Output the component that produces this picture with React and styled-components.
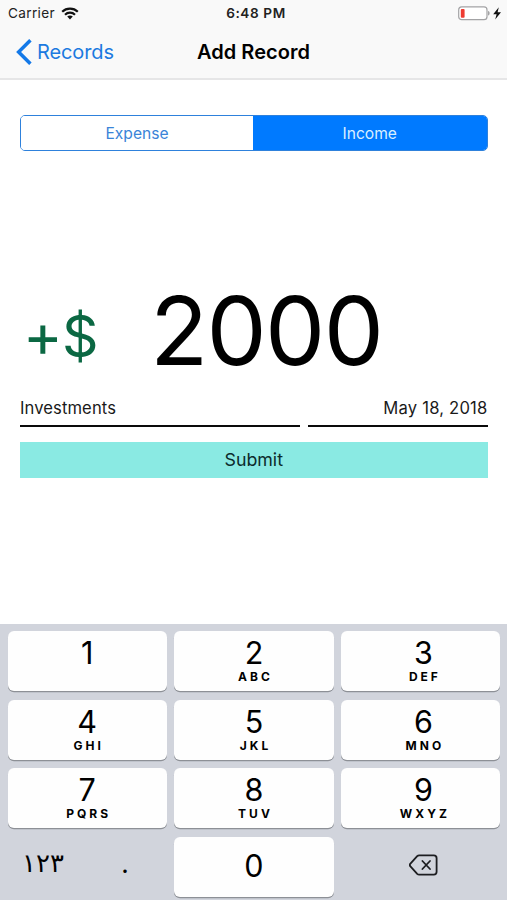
import React, {useState} from 'react'
import styled, {createGlobalStyle} from "styled-components"

const GlobalStyle = createGlobalStyle`
  * {
    box-sizing: border-box;
  }

  body {
    margin: 0;
    background: #fff;
    font-family: Inter, "Liberation Sans", sans-serif;
    color: #000;
  }

  button {
    font-family: inherit;
    color: inherit;
    border: none;
    padding: 0;
    background: none;
  }
`

const Screen = styled.div`
  display: flex;
  flex-direction: column;
  width: 507px;
  height: 900px;
  overflow: hidden;
  background: #fff;
`

const Header = styled.header`
  height: 80px;
  background: #f9f9f9;
  border-bottom: 2px solid #e6e6e7;
`

const StatusBar = styled.div`
  display: grid;
  grid-template-columns: 1fr auto 1fr;
  align-items: center;
  height: 27px;
  padding: 0 5px 0 8px;
  font-size: 13.6px;
  line-height: 27px;
  color: #222;
`

const Carrier = styled.div`
  display: flex;
  align-items: center;
  gap: 6px;
  letter-spacing: 0.35px;
`

const Time = styled.div`
  padding-left: 2px;
  font-weight: 600;
  font-size: 13.6px;
  letter-spacing: 0.6px;
`

const Battery = styled.div`
  display: flex;
  justify-content: flex-end;
`

const NavBar = styled.nav`
  display: grid;
  grid-template-columns: 1fr auto 1fr;
  align-items: center;
  height: 50px;
  padding: 0 16px;
`

const BackBtn = styled.button`
  display: flex;
  align-items: center;
  gap: 5px;
  font-size: 20px;
  letter-spacing: -0.1px;
  color: #1c7ae0;
`

const Title = styled.h1`
  margin: 0;
  font-size: 20px;
  font-weight: 600;
  letter-spacing: 0.05px;
`

const Form = styled.main`
  display: flex;
  flex-direction: column;
  height: 544px;
  padding: 35px 19.5px 0 20px;
`

const Tabs = styled.div`
  display: grid;
  grid-template-columns: 232px 1fr;
  height: 36px;
  border: 1.5px solid #2e81dc;
  border-radius: 5px;
  overflow: hidden;
`

const TabBtn = styled.button`
  font-size: 15.6px;
  color: ${props => props.$active ? '#d9efff' : '#3a84d8'};
  background: ${props => props.$active ? '#007aff' : '#fff'};
`

const Amount = styled.div`
  display: flex;
  height: 116px;
  margin-top: 121px;
  line-height: 116px;
`

const Sign = styled.span`
  width: 130px;
  padding: 5px 0 0 3px;
  font-size: 57px;
  font-feature-settings: "calt" 0;
  color: #0b6843;
`

const Operator = styled.span`
  font-size: 60px;
  letter-spacing: -0.8px;
`

const Value = styled.span`
  font-size: 95.5px;
  letter-spacing: -1.7px;
`

const Fields = styled.div`
  display: grid;
  grid-template-columns: 280px 1fr;
  gap: 8px;
  margin-top: 5px;
`

const Field = styled.div`
  height: 34px;
  border-bottom: 2.5px solid #0a0a0a;
  font-size: 16.6px;
  letter-spacing: ${props => props.$right ? '0.2px' : '0.1px'};
  line-height: 31px;
  text-align: ${props => props.$right ? 'right' : 'left'};
  color: #1a1a1a;
`

const SubmitBtn = styled.button`
  flex: none;
  height: 36px;
  margin-top: 15px;
  padding-bottom: 1px;
  background: #8aeae3;
  font-size: 17.8px;
  color: #0c2b2c;
`

const Keyboard = styled.div`
  flex: 1;
  display: grid;
  grid-template-columns: repeat(3, minmax(0, 1fr));
  grid-auto-rows: 60px;
  gap: 8.6px 7.2px;
  padding: 7px 7px 0 8px;
  background: #d1d4dc;

  > :nth-child(3n) {
    padding-left: 6px;
  }
  > :nth-child(3n + 1) {
    padding-right: 1px;
  }
`

const Key = styled.button`
  display: flex;
  flex-direction: column;
  align-items: center;
  justify-content: ${props => props.$center ? 'center' : 'flex-start'};
  padding-top: ${props => props.$center ? 0 : '4px'};
  padding-bottom: ${props => props.$center ? '2px' : 0};
  border-radius: 6px;
  background: #fefefe;
  box-shadow: 0 1.3px 0 #8d9096;
`

const Digit = styled.span`
  font-size: 30.5px;
  line-height: 35px;
`

const Letters = styled.span`
  font-size: 12px;
  font-weight: 650;
  line-height: 14px;
  letter-spacing: 3px;
  margin-right: -3px;
`

const SplitKey = styled.div`
  display: grid;
  grid-template-columns: 76px 1fr;
`

const PlainKey = styled.button`
  display: flex;
  align-items: center;
  justify-content: center;
  padding-right: ${props => props.$right || 0}px;
  padding-bottom: ${props => props.$lift || 4}px;
  font-size: 26px;
  line-height: 30px;
`

const ArabicDigits = styled.span`
  font-family: "DejaVu Sans", sans-serif;
`

const keys = [
  ['1', ''],
  ['2', 'ABC'],
  ['3', 'DEF'],
  ['4', 'GHI'],
  ['5', 'JKL'],
  ['6', 'MNO'],
  ['7', 'PQRS'],
  ['8', 'TUV'],
  ['9', 'WXYZ'],
]

const WifiIcon = () => (
  <svg width="18" height="13" viewBox="0 0 18 13" fill="none" stroke="#111" strokeWidth="2.2">
    <path d="M1.2 4.7C5.5 0.6 12.5 0.6 16.8 4.7" />
    <path d="M4 7.7C6.8 5 11.2 5 14 7.7" />
    <path d="M9 12.4L6.2 9.6C7.8 8.1 10.2 8.1 11.8 9.6Z" fill="#111" stroke="none" />
  </svg>
)

const BatteryIcon = () => (
  <svg width="44" height="16" viewBox="0 0 44 16">
    <rect x="0.7" y="0.9" width="28.3" height="12.8" rx="3" fill="#fff" stroke="#a3a3a5" strokeWidth="1.2" />
    <rect x="2.8" y="2.9" width="3.8" height="8.8" rx="1" fill="#ee3b32" />
    <path d="M30 5C32.2 5.5 32.2 9.1 30 9.6Z" fill="#a3a3a5" />
    <path d="M40.8 1.2L35.2 8.3H38.6L37.2 13.6L43 6.3H39.6Z" fill="#111" />
  </svg>
)

const ChevronIcon = () => (
  <svg width="16" height="26" viewBox="0 0 16 26" fill="none" stroke="#1479e8" strokeWidth="3.5">
    <path d="M14.4 1.2L2.6 13L14.4 24.8" />
  </svg>
)

const DeleteIcon = () => (
  <svg width="29" height="22" viewBox="0 0 29 22" fill="none" stroke="#1c1d20" strokeWidth="1.8" strokeLinejoin="round" strokeLinecap="round">
    <path d="M10.2 1.4H24.8Q27.6 1.4 27.6 4.2V17.8Q27.6 20.6 24.8 20.6H10.2Q9 20.6 8.2 19.8L1.2 12.2Q0.4 11 1.2 9.8L8.2 2.2Q9 1.4 10.2 1.4Z" />
    <path d="M13.4 7L21 15M21 7L13.4 15" />
  </svg>
)

const App = () => {
  const [type, setType] = useState('income')
  const [amount, setAmount] = useState('2000')

  const press = (char) => {
    setAmount(amount + char)
  }

  return (
    <Screen>
      <GlobalStyle />
      <Header>
        <StatusBar>
          <Carrier>Carrier <WifiIcon /></Carrier>
          <Time>6:48 PM</Time>
          <Battery><BatteryIcon /></Battery>
        </StatusBar>
        <NavBar>
          <BackBtn><ChevronIcon />Records</BackBtn>
          <Title>Add Record</Title>
        </NavBar>
      </Header>
      <Form>
        <Tabs>
          <TabBtn $active={type === 'expense'} onClick={() => setType('expense')}>Expense</TabBtn>
          <TabBtn $active={type === 'income'} onClick={() => setType('income')}>Income</TabBtn>
        </Tabs>
        <Amount>
          <Sign><Operator>{type === 'income' ? '+' : '-'}</Operator>$</Sign>
          <Value>{amount}</Value>
        </Amount>
        <Fields>
          <Field>Investments</Field>
          <Field $right>May 18, 2018</Field>
        </Fields>
        <SubmitBtn>Submit</SubmitBtn>
      </Form>
      <Keyboard>
        {keys.map(([digit, letters]) => (
          <Key key={digit} onClick={() => press(digit)}>
            <Digit>{digit}</Digit>
            <Letters>{letters}</Letters>
          </Key>
        ))}
        <SplitKey>
          <PlainKey $lift={8} $right={6}><ArabicDigits>١٢٣</ArabicDigits></PlainKey>
          <PlainKey $lift={6} onClick={() => press('.')}>.</PlainKey>
        </SplitKey>
        <Key $center onClick={() => press('0')}>
          <Digit>0</Digit>
        </Key>
        <PlainKey onClick={() => setAmount(amount.slice(0, -1))}>
          <DeleteIcon />
        </PlainKey>
      </Keyboard>
    </Screen>
  )
}

export default App
